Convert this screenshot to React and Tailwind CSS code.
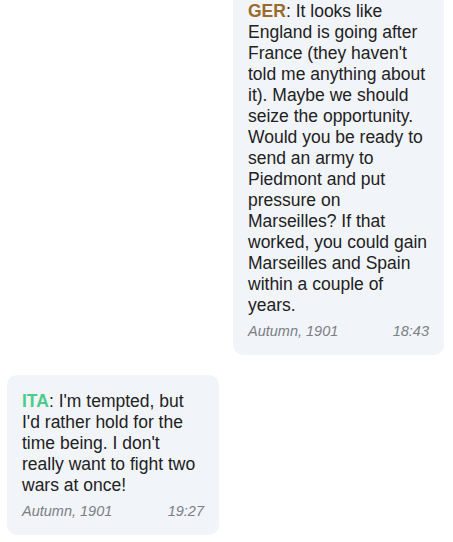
import React from 'react';

const messages = [
  {
    from: 'GER',
    color: 'text-[#9a6a2c]',
    side: 'right',
    text: "It looks like England is going after France (they haven't told me anything about it). Maybe we should seize the opportunity. Would you be ready to send an army to Piedmont and put pressure on Marseilles? If that worked, you could gain Marseilles and Spain within a couple of years.",
    phase: 'Autumn, 1901',
    time: '18:43',
  },
  {
    from: 'ITA',
    color: 'text-[#4ccb8a]',
    side: 'left',
    text: "I'm tempted, but I'd rather hold for the time being. I don't really want to fight two wars at once!",
    phase: 'Autumn, 1901',
    time: '19:27',
  },
];

export default function App() {
  return (
    <div
      className="flex h-[542px] flex-col justify-end gap-[20px] overflow-hidden bg-white pb-[7px]"
      style={{ fontFamily: '"Liberation Sans", Arial, sans-serif' }}
    >
      {messages.map((m, idx) => (
        <div
          key={idx}
          className={
            m.side === 'right'
              ? 'ml-[233px] w-[211px] shrink-0 rounded-[10px] bg-[#f1f4f9] px-[15px] pt-[16px] pb-[14px]'
              : 'ml-[7px] w-[212px] shrink-0 rounded-[10px] bg-[#f1f4f9] px-[15px] pt-[16px] pb-[14px]'
          }
        >
          <div className="text-[17.5px] leading-[21px] text-[#222]">
            <span className={`font-bold ${m.color}`}>{m.from}</span>: {m.text}
          </div>
          <div className="mt-[5px] flex justify-between text-[14.5px] italic leading-[20px] text-[#7b7f86]">
            <span>{m.phase}</span>
            <span>{m.time}</span>
          </div>
        </div>
      ))}
    </div>
  );
}
